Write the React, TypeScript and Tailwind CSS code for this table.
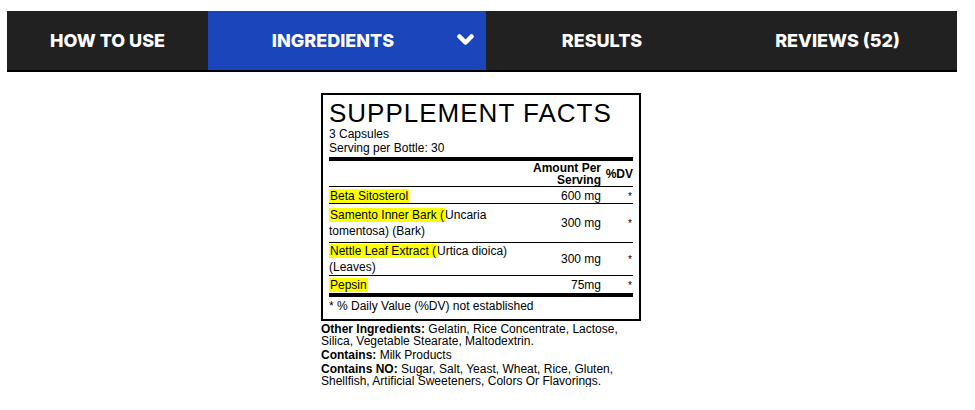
const tabs = [
  { label: "HOW TO USE", width: "w-[201px]" },
  { label: "INGREDIENTS", width: "w-[278px] pr-[28px]", active: true },
  { label: "RESULTS", width: "w-[232px]" },
  { label: "REVIEWS (52)", width: "w-[239px]" },
];

const rows = [
  { name: "Beta Sitosterol", rest: null, amount: "600 mg", pad: "h-[17px]" },
  { name: "Samento Inner Bark (", rest: "Uncaria", rest2: "tomentosa) (Bark)", amount: "300 mg", pad: "h-[39px]" },
  { name: "Nettle Leaf Extract (", rest: "Urtica dioica)", rest2: "(Leaves)", amount: "300 mg", pad: "h-[33px]" },
  { name: "Pepsin", rest: null, amount: "75mg", pad: "h-[17px]" },
];

const Chevron = () => (
  <svg width="17" height="12" viewBox="0 0 17 12" className="absolute right-[12px] top-[23px]">
    <path d="M2.5 2.5 L8.5 8.5 L14.5 2.5" fill="none" stroke="white" strokeWidth="4.5" strokeLinecap="round" strokeLinejoin="round" />
  </svg>
);

const Nav = () => (
  <div className="flex h-[61px] w-[950px] border-b-2 border-black bg-[#212121]">
    {tabs.map((tab) => (
      <div
        key={tab.label}
        className={`relative flex items-center justify-center ${tab.width} ${tab.active ? "bg-[#1b45bb]" : ""}`}
      >
        <span className="font-['Inter',sans-serif] text-[18px] font-extrabold text-white">{tab.label}</span>
        {tab.active && <Chevron />}
      </div>
    ))}
  </div>
);

const SupplementFacts = () => (
  <div className="w-[320px] border-2 border-black px-[6px] pb-[6px] pt-[5px] font-['Liberation_Sans',Arial,sans-serif] text-[12px] text-black">
    <h2 className="text-[26px] leading-[27px] tracking-[1px]">SUPPLEMENT FACTS</h2>
    <p className="leading-[14px]">3 Capsules</p>
    <p className="leading-[14px]">Serving per Bottle: 30</p>
    <div className="mt-[2px] h-[4px] bg-black" />
    <div className="grid grid-cols-[1fr_auto_32px] items-center border-b border-black pt-[1px] font-bold">
      <span />
      <span className="text-right leading-[12px]">
        Amount Per
        <br />
        Serving
      </span>
      <span className="text-right">%DV</span>
    </div>
    {rows.map((row, i) => (
      <div
        key={row.name}
        className={`grid grid-cols-[1fr_auto_32px] items-center ${row.pad} ${i < rows.length - 1 ? "border-b border-black" : ""}`}
      >
        <span className="leading-[16px]">
          <span className="bg-[#ffff00] px-[1px]">{row.name}</span>
          {row.rest}
          {row.rest2 && (
            <>
              <br />
              {row.rest2}
            </>
          )}
        </span>
        <span className="text-right">{row.amount}</span>
        <span className="pr-[1px] text-right text-[10px]">*</span>
      </div>
    ))}
    <div className="h-[4px] bg-black" />
    <p className="mt-[2px] leading-[14px]">* % Daily Value (%DV) not established</p>
  </div>
);

export default function App() {
  return (
    <div className="bg-white pl-[7px] pt-[11px]">
      <Nav />
      <div className="flex w-[950px] justify-center pr-[2px] pt-[21px]">
        <div>
          <SupplementFacts />
          <div className="mt-[2px] whitespace-nowrap font-['Liberation_Sans',Arial,sans-serif] text-[12px] leading-[12px] text-black">
            <p>
              <b>Other Ingredients:</b> Gelatin, Rice Concentrate, Lactose,
              <br />
              Silica, Vegetable Stearate, Maltodextrin.
            </p>
            <p className="mt-[2px]">
              <b>Contains:</b> Milk Products
            </p>
            <p className="mt-[2px]">
              <b>Contains NO:</b> Sugar, Salt, Yeast, Wheat, Rice, Gluten,
              <br />
              Shellfish, Artificial Sweeteners, Colors Or Flavorings.
            </p>
          </div>
        </div>
      </div>
    </div>
  );
}
